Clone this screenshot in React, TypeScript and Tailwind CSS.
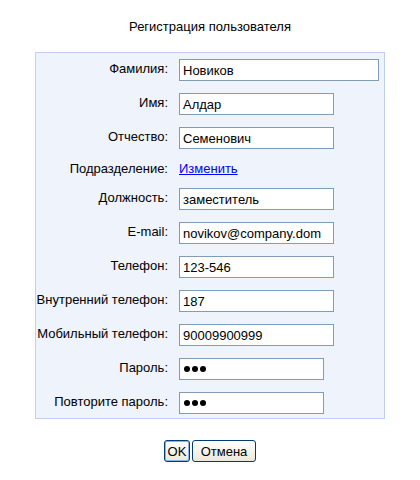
const rows: { label: string; value?: string; width: string; type?: string; link?: boolean }[] = [
  { label: "Фамилия:", value: "Новиков", width: "w-[200px]" },
  { label: "Имя:", value: "Алдар", width: "w-[155px]" },
  { label: "Отчество:", value: "Семенович", width: "w-[155px]" },
  { label: "Подразделение:", width: "", link: true },
  { label: "Должность:", value: "заместитель", width: "w-[155px]" },
  { label: "E-mail:", value: "novikov@company.dom", width: "w-[155px]" },
  { label: "Телефон:", value: "123-546", width: "w-[155px]" },
  { label: "Внутренний телефон:", value: "187", width: "w-[155px]" },
  { label: "Мобильный телефон:", value: "90009900999", width: "w-[155px]" },
  { label: "Пароль:", width: "w-[145px]", type: "password" },
  { label: "Повторите пароль:", width: "w-[145px]", type: "password" },
];

export default function App() {
  return (
    <div className="w-[420px] h-[480px] bg-white text-black font-['Liberation_Sans',Arial,sans-serif] text-[13px] leading-[15px]">
      <div className="pt-[19px] text-center">Регистрация пользователя</div>

      <div className="mt-[18px] ml-[35px] w-[350px] border border-[#c0cff0] bg-[#eef3fc] pt-[6px] pb-[4px] flex flex-col gap-[12px]">
        {rows.map((r) => (
          <div key={r.label} className="flex items-center">
            <div className={`w-[133px] text-right pr-[1px] ${r.link ? "" : "-mt-[3px]"}`}>{r.label}</div>
            <div className="ml-[10px]">
              {r.link ? (
                <a href="#" className="text-[#0000ff] underline block">Изменить</a>
              ) : (
                <div className={`${r.width} h-[22px] bg-white border border-[#7f9db9] px-[3px] flex items-center`}>
                  {r.type === "password" ? (
                    <span className="flex gap-[2px] pl-[1px]">
                      <span className="w-[6px] h-[6px] rounded-full bg-black" />
                      <span className="w-[6px] h-[6px] rounded-full bg-black" />
                      <span className="w-[6px] h-[6px] rounded-full bg-black" />
                    </span>
                  ) : (
                    r.value
                  )}
                </div>
              )}
            </div>
          </div>
        ))}
      </div>

      <div className="mt-[21px] flex justify-center gap-[2px]">
        <button className="w-[26px] h-[22px] rounded-[3px] border border-[#003c74] bg-gradient-to-b from-white to-[#ece9d8] shadow-[inset_0_0_0_1px_#8ab2f0] leading-none">
          OK
        </button>
        <button className="w-[64px] h-[22px] rounded-[3px] border border-[#003c74] bg-gradient-to-b from-white to-[#ece9d8] leading-none">
          Отмена
        </button>
      </div>
    </div>
  );
}
